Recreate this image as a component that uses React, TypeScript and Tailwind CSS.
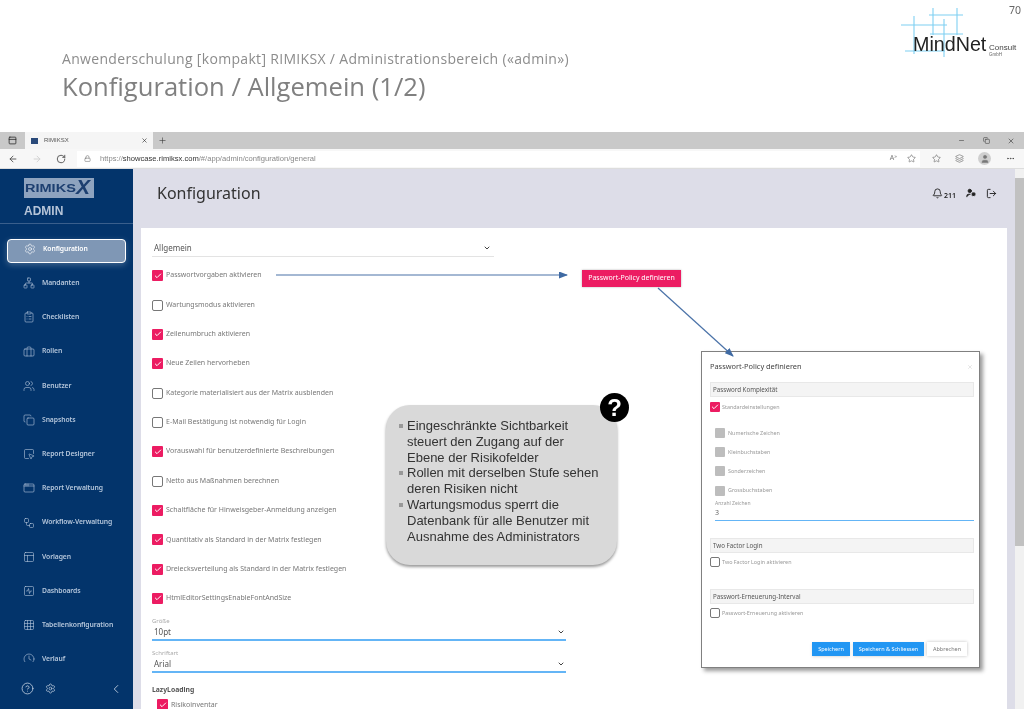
import {
  AppWindow, ArrowLeft, ArrowRight, Bell, Briefcase, Check, ChevronDown, ChevronLeft,
  ClipboardList, Clock, Copy, Ellipsis, Grid3x3, HelpCircle, Layers, Lock, LogOut, Minus, Network, PanelTop, PanelsTopLeft, Plus, RotateCw,
  Settings, SquareActivity, SquareMousePointer, Star, User, UserCog, Users, Workflow, X,
} from 'lucide-react';

const navItems = [
  { label: 'Konfiguration', icon: Settings, active: true },
  { label: 'Mandanten', icon: Network },
  { label: 'Checklisten', icon: ClipboardList },
  { label: 'Rollen', icon: Briefcase },
  { label: 'Benutzer', icon: Users },
  { label: 'Snapshots', icon: Copy },
  { label: 'Report Designer', icon: SquareMousePointer },
  { label: 'Report Verwaltung', icon: AppWindow },
  { label: 'Workflow-Verwaltung', icon: Workflow },
  { label: 'Vorlagen', icon: PanelsTopLeft },
  { label: 'Dashboards', icon: SquareActivity },
  { label: 'Tabellenkonfiguration', icon: Grid3x3 },
  { label: 'Verlauf', icon: Clock },
];

const options = [
  { label: 'Passwortvorgaben aktivieren', on: true },
  { label: 'Wartungsmodus aktivieren', on: false },
  { label: 'Zeilenumbruch aktivieren', on: true },
  { label: 'Neue Zeilen hervorheben', on: true },
  { label: 'Kategorie materialisiert aus der Matrix ausblenden', on: false },
  { label: 'E-Mail Bestätigung ist notwendig für Login', on: false },
  { label: 'Vorauswahl für benutzerdefinierte Beschreibungen', on: true },
  { label: 'Netto aus Maßnahmen berechnen', on: false },
  { label: 'Schaltfläche für Hinweisgeber-Anmeldung anzeigen', on: true },
  { label: 'Quantitativ als Standard in der Matrix festlegen', on: true },
  { label: 'Dreiecksverteilung als Standard in der Matrix festlegen', on: true },
  { label: 'HtmlEditorSettingsEnableFontAndSize', on: true },
];

function Box({ on, size = 'w-[11px] h-[11px]' }: { on: boolean; size?: string }) {
  if (on) {
    return (
      <span className={`${size} shrink-0 rounded-[1px] bg-[#ec1c62] flex items-center justify-center`}>
        <Check className="w-[8px] h-[8px] text-white" strokeWidth={3} />
      </span>
    );
  }
  return <span className={`${size} shrink-0 rounded-[2px] border-[1.5px] border-[#777] bg-white`} />;
}

function SelectField({ label, value }: { label: string; value: string }) {
  return (
    <div className="w-[414px] h-[24px] flex flex-col">
      <span className="text-[6px] leading-[8px] text-[#aaa]">{label}</span>
      <div className="flex-1 flex items-center justify-between pl-[2px] pr-[1px] pb-[1px] border-b-2 border-[#64b5f6]">
        <span className="text-[8px] leading-[10px] text-[#555]">{value}</span>
        <ChevronDown className="w-[8px] h-[8px] text-[#444]" strokeWidth={3} />
      </div>
    </div>
  );
}

function Sidebar() {
  return (
    <aside className="w-[133px] shrink-0 h-full bg-[#03346b] flex flex-col">
      <div className="h-[55px] shrink-0 border-b border-[#3a5f8c] pl-[24px] pt-[9px]">
        <div className="relative w-[70px] h-[20px] bg-[#8ea3bf] flex items-center pl-[1px]">
          <span className="text-[11px] font-bold text-[#1d3f70] [font-family:'Liberation_Sans',sans-serif] scale-x-[1.32] origin-left">RIMIKS</span>
          <span className="absolute right-[4px] top-[-4px] text-[21px] leading-[26px] italic font-bold text-[#1d3f70] [font-family:'Liberation_Sans',sans-serif]">X</span>
        </div>
        <div className="mt-[5px] text-[12px] leading-[16px] font-bold text-[#b5c4d8] [font-family:'Liberation_Sans',sans-serif]">ADMIN</div>
      </div>
      <nav className="flex-1 overflow-hidden flex flex-col pt-[15px] px-[7px] gap-[10.2px]">
        {navItems.map(({ label, icon: Icon, active }) => (
          <div
            key={label}
            className={`h-[24px] shrink-0 flex items-center pl-[16px] pb-[4px] gap-[7px] rounded-[4px] ${active ? 'bg-[#7f97b5] border border-white shadow-[0_2px_6px_rgba(255,255,255,0.25)] text-white' : 'text-[#b5c6db]'}`}
          >
            <Icon className="w-[12px] h-[12px] shrink-0" strokeWidth={1.2} />
            <span className="text-[6.8px] font-semibold tracking-[-0.1px] whitespace-nowrap">{label}</span>
          </div>
        ))}
      </nav>
      <div className="h-[47px] shrink-0 bg-[#03346b] flex items-center pt-[6px] pl-[21px] pr-[10px] text-[#c3d0e0]">
        <HelpCircle className="w-[13px] h-[13px]" strokeWidth={1.5} />
        <Settings className="w-[11px] h-[11px] ml-[11px]" strokeWidth={1.5} />
        <ChevronLeft className="w-[14px] h-[14px] ml-auto" strokeWidth={1.5} />
      </div>
    </aside>
  );
}

function ConfigCard() {
  return (
    <div className="mx-[8px] h-[482px] bg-white pt-[11px] pl-[11px] overflow-hidden">
      <div className="w-[342px] h-[18px] flex items-center justify-between px-[2px] border-b border-[#e3e3e3]">
        <span className="text-[8px] text-[#555]">Allgemein</span>
        <ChevronDown className="w-[8px] h-[8px] mr-[1px] text-[#444]" strokeWidth={3} />
      </div>
      <div className="mt-[4px] flex flex-col">
        {options.map((o) => (
          <div key={o.label} className="h-[29.35px] flex items-center gap-[3px]">
            <Box on={o.on} />
            <span className="text-[7px] text-[#777] whitespace-nowrap">{o.label}</span>
          </div>
        ))}
      </div>
      <div className="mt-[4px] flex flex-col gap-[8px]">
        <SelectField label="Größe" value="10pt" />
        <SelectField label="Schriftart" value="Arial" />
      </div>
      <div className="mt-[12px] text-[6.8px] leading-[10px] font-bold text-[#555]">LazyLoading</div>
      <div className="mt-[4px] ml-[5px] flex items-center gap-[3px]">
        <Box on />
        <span className="text-[7px] leading-[8px] text-[#777]">Risikoinventar</span>
      </div>
    </div>
  );
}

function SectionBar({ title }: { title: string }) {
  return <div className="h-[15px] flex items-center px-[2px] bg-[#f4f4f4] border border-[#e8e8e8] text-[6.2px] text-[#555]">{title}</div>;
}

function PolicyDialog() {
  return (
    <div className="absolute left-[701px] top-[351px] w-[279px] h-[317px] bg-white border border-[#808080] shadow-[3px_3px_4px_rgba(0,0,0,0.4)] pl-[8px] pr-[5px] flex flex-col text-[5.4px] text-[#999]">
      <div className="h-[30px] shrink-0 flex items-center justify-between pr-[1px]">
        <span className="text-[7.4px] text-[#444]">Passwort-Policy definieren</span>
        <X className="w-[6px] h-[6px] text-[#ccc]" />
      </div>
      <SectionBar title="Password Komplexität" />
      <div className="mt-[5px] flex items-center gap-[2px]">
        <Box on size="w-[10px] h-[10px]" />
        <span>Standardeinstellungen</span>
      </div>
      <div className="mt-[11px] ml-[5px] flex flex-col">
        {['Numerische Zeichen', 'Kleinbuchstaben', 'Sonderzeichen', 'Grossbuchstaben'].map((t) => (
          <div key={t} className="h-[19.3px] flex items-center gap-[3px]">
            <span className="w-[10px] h-[10px] bg-[#bdbdbd] rounded-[1px]" />
            <span>{t}</span>
          </div>
        ))}
      </div>
      <div className="ml-[5px] mt-[-1px] h-[22px] border-b border-[#64b5f6] flex flex-col">
        <span className="text-[5px] leading-[8px]">Anzahl Zeichen</span>
        <span className="text-[7px] leading-[11px] text-[#666]">3</span>
      </div>
      <div className="mt-[17px]"><SectionBar title="Two Factor Login" /></div>
      <div className="mt-[4px] flex items-center gap-[2px]">
        <Box on={false} size="w-[10px] h-[10px]" />
        <span>Two Factor Login aktivieren</span>
      </div>
      <div className="mt-[22px]"><SectionBar title="Passwort-Erneuerung-Interval" /></div>
      <div className="mt-[4px] flex items-center gap-[2px]">
        <Box on={false} size="w-[10px] h-[10px]" />
        <span>Passwort-Erneuerung aktivieren</span>
      </div>
      <div className="mt-[24px] mr-[7px] flex justify-end gap-[3px] text-[5.5px]">
        <span className="w-[38px] h-[14px] flex items-center justify-center bg-[#2196f3] text-white shadow-sm">Speichern</span>
        <span className="w-[71px] h-[14px] flex items-center justify-center bg-[#2196f3] text-white shadow-sm">Speichern &amp; Schliessen</span>
        <span className="w-[40px] h-[14px] flex items-center justify-center bg-white text-[#777] shadow-[0_0_3px_rgba(0,0,0,0.25)]">Abbrechen</span>
      </div>
    </div>
  );
}

function Callout() {
  const bullets = [
    ['Eingeschränkte Sichtbarkeit', 'steuert den Zugang auf der', 'Ebene der Risikofelder'],
    ['Rollen mit derselben Stufe sehen', 'deren Risiken nicht'],
    ['Wartungsmodus sperrt die', 'Datenbank für alle Benutzer mit', 'Ausnahme des Administrators'],
  ];
  return (
    <>
      <div className="absolute left-[386px] top-[405px] w-[231px] h-[160px] rounded-[24px] bg-[#d9d9d9] shadow-[0_2px_3px_rgba(0,0,0,0.4)] pt-[13px] pl-[21px] text-[13px] leading-[15.8px] text-[#333] [font-family:'Liberation_Sans',sans-serif]">
        {bullets.map((lines) => (
          <div key={lines[0]} className="relative">
            <span className="absolute left-[-8px] top-[6px] w-[4px] h-[4px] bg-[#999]" />
            {lines.map((l) => (
              <div key={l} className="whitespace-nowrap">{l}</div>
            ))}
          </div>
        ))}
      </div>
      <div className="absolute left-[600px] top-[393px] w-[29px] h-[29px] rounded-full bg-black flex items-center justify-center text-white text-[24px] font-bold [font-family:'Liberation_Sans',sans-serif]">?</div>
    </>
  );
}

function Annotations() {
  return (
    <>
      <svg className="absolute left-0 top-0 pointer-events-none" width="1024" height="709">
        <defs>
          <marker id="head" markerWidth="9" markerHeight="7" refX="8" refY="3.5" orient="auto" markerUnits="userSpaceOnUse">
            <path d="M0 0 L9 3.5 L0 7 Z" fill="#3f6aa3" />
          </marker>
        </defs>
        <line x1="276" y1="275" x2="567" y2="275" stroke="#4a72a8" strokeWidth="1.2" markerEnd="url(#head)" />
        <line x1="658" y1="288" x2="733" y2="356" stroke="#4a72a8" strokeWidth="1.2" markerEnd="url(#head)" />
      </svg>
      <div className="absolute left-[582px] top-[270px] w-[99px] h-[17px] bg-[#ec1c62] shadow-[0_0_2px_rgba(0,0,0,0.3)] flex items-center justify-center text-[7px] text-white">
        Passwort-Policy definieren
      </div>
    </>
  );
}

function Logo() {
  return (
    <svg width="130" height="60" viewBox="894 0 130 60" className="shrink-0">
      <g stroke="#7fd0f2" strokeWidth="1.1">
        <line x1="901" y1="25" x2="947" y2="25" />
        <line x1="929" y1="15" x2="963" y2="15" />
        <line x1="930" y1="34" x2="963" y2="34" />
        <line x1="905" y1="51" x2="945" y2="51" />
        <line x1="914" y1="16" x2="914" y2="54" />
        <line x1="933" y1="8" x2="933" y2="35" />
        <line x1="944" y1="19" x2="944" y2="57" />
        <line x1="957" y1="8" x2="957" y2="35" />
      </g>
      <text x="913" y="51" fontSize="19.7" fill="#222" fontFamily="Liberation Sans, sans-serif">MindNet</text>
      <text x="989" y="50" fontSize="8" fill="#444" fontFamily="Liberation Sans, sans-serif">Consult</text>
      <text x="989" y="55.5" fontSize="4.5" fill="#666" fontFamily="Liberation Sans, sans-serif">GmbH</text>
    </svg>
  );
}

function BrowserChrome() {
  return (
    <div className="h-[37px] shrink-0 flex flex-col text-[#444]">
      <div className="h-[17px] bg-[#c9c9c9] flex items-center">
        <div className="w-[25px] flex justify-center"><PanelTop className="w-[9px] h-[9px] text-[#222]" strokeWidth={2} /></div>
        <div className="w-[128px] h-full bg-[#f5f5f5] flex items-center pl-[6px] pr-[5px]">
          <span className="w-[7px] h-[6px] bg-[#2a4a7a]" />
          <span className="ml-[6px] text-[6px] text-[#555] [font-family:'Liberation_Sans',sans-serif]">RIMIKSX</span>
          <X className="ml-auto w-[7px] h-[7px] text-[#222]" strokeWidth={2} />
        </div>
        <Plus className="ml-[5px] w-[9px] h-[9px] text-[#333]" strokeWidth={1.5} />
        <div className="ml-auto flex items-center gap-[17.5px] pr-[9px]">
          <Minus className="w-[7px] h-[7px]" />
          <Copy className="w-[7px] h-[7px]" strokeWidth={2} />
          <X className="w-[8px] h-[8px]" />
        </div>
      </div>
      <div className="h-[20px] bg-[#f7f7f7] flex items-center border-b border-[#ddd]">
        <ArrowLeft className="ml-[8px] w-[10px] h-[10px]" />
        <ArrowRight className="ml-[14px] w-[10px] h-[10px] text-[#ccc]" />
        <RotateCw className="ml-[14px] w-[10px] h-[10px]" />
        <div className="ml-[11px] flex-1 h-[16px] bg-white flex items-center pl-[7px]">
          <Lock className="w-[7px] h-[7px] text-[#777]" />
          <span className="ml-[9px] text-[7.6px] text-[#888] whitespace-nowrap [font-family:'Liberation_Sans',sans-serif]">
            https://<span className="text-[#333]">showcase.rimiksx.com</span>/#/app/admin/configuration/general
          </span>
          <span className="ml-auto mr-[10px] text-[7px] text-[#777]">A<sup>»</sup></span>
          <Star className="w-[9px] h-[9px] mr-[4px]" strokeWidth={1.3} />
        </div>
        <div className="flex items-center w-[104px] shrink-0 pl-[12px] gap-[14px]">
          <Star className="w-[9px] h-[9px]" strokeWidth={1.3} />
          <Layers className="w-[9px] h-[9px]" strokeWidth={1.3} />
          <span className="w-[13px] h-[13px] rounded-full bg-[#cfcfcf] flex items-center justify-center">
            <User className="w-[10px] h-[10px] text-[#777] fill-[#777]" strokeWidth={1} />
          </span>
          <Ellipsis className="ml-[1px] w-[9px] h-[9px]" />
        </div>
      </div>
    </div>
  );
}

export default function App() {
  return (
    <div className="relative w-[1024px] h-[709px] overflow-hidden bg-white flex flex-col blur-[0.35px] [font-family:'Noto_Sans','Open_Sans',sans-serif]">
      <div className="h-[132px] shrink-0 flex justify-between [font-family:'Open_Sans',sans-serif]">
        <div className="pl-[62px] pt-[50px]">
          <div className="text-[14px] leading-[18px] tracking-[0.32px] text-[#8c8c8c]">Anwenderschulung [kompakt] RIMIKSX / Administrationsbereich («admin»)</div>
          <div className="mt-[2px] text-[25.6px] leading-[34px] text-[#808080]">Konfiguration / Allgemein (1/2)</div>
        </div>
        <div className="flex items-start">
          <Logo />
        </div>
      </div>
      <div className="absolute right-[3px] top-[3px] text-[10.5px] text-[#666]">70</div>
      <BrowserChrome />
      <div className="flex-1 min-h-0 flex">
        <Sidebar />
        <main className="flex-1 min-w-0 h-full bg-[#dddde8] overflow-hidden flex">
          <div className="flex-1 min-w-0">
            <div className="h-[59px] flex items-center justify-between pl-[24px] pr-[18px] pb-[11px]">
              <h1 className="text-[16px] text-[#333]">Konfiguration</h1>
              <div className="flex items-center gap-[10px] text-[#222]">
                <span className="flex items-end">
                  <Bell className="w-[11px] h-[11px]" strokeWidth={2} />
                  <span className="ml-[1px] text-[7px] leading-[7px] font-semibold">211</span>
                </span>
                <UserCog className="w-[10px] h-[10px] fill-[#222]" strokeWidth={2.2} />
                <LogOut className="w-[11px] h-[11px]" strokeWidth={2} />
              </div>
            </div>
            <ConfigCard />
          </div>
          <div className="w-[9px] shrink-0 bg-[#f1f1f1] pt-[9px]">
            <div className="h-[368px] bg-[#c1c1c1]" />
          </div>
        </main>
      </div>
      <PolicyDialog />
      <Annotations />
      <Callout />
    </div>
  );
}
